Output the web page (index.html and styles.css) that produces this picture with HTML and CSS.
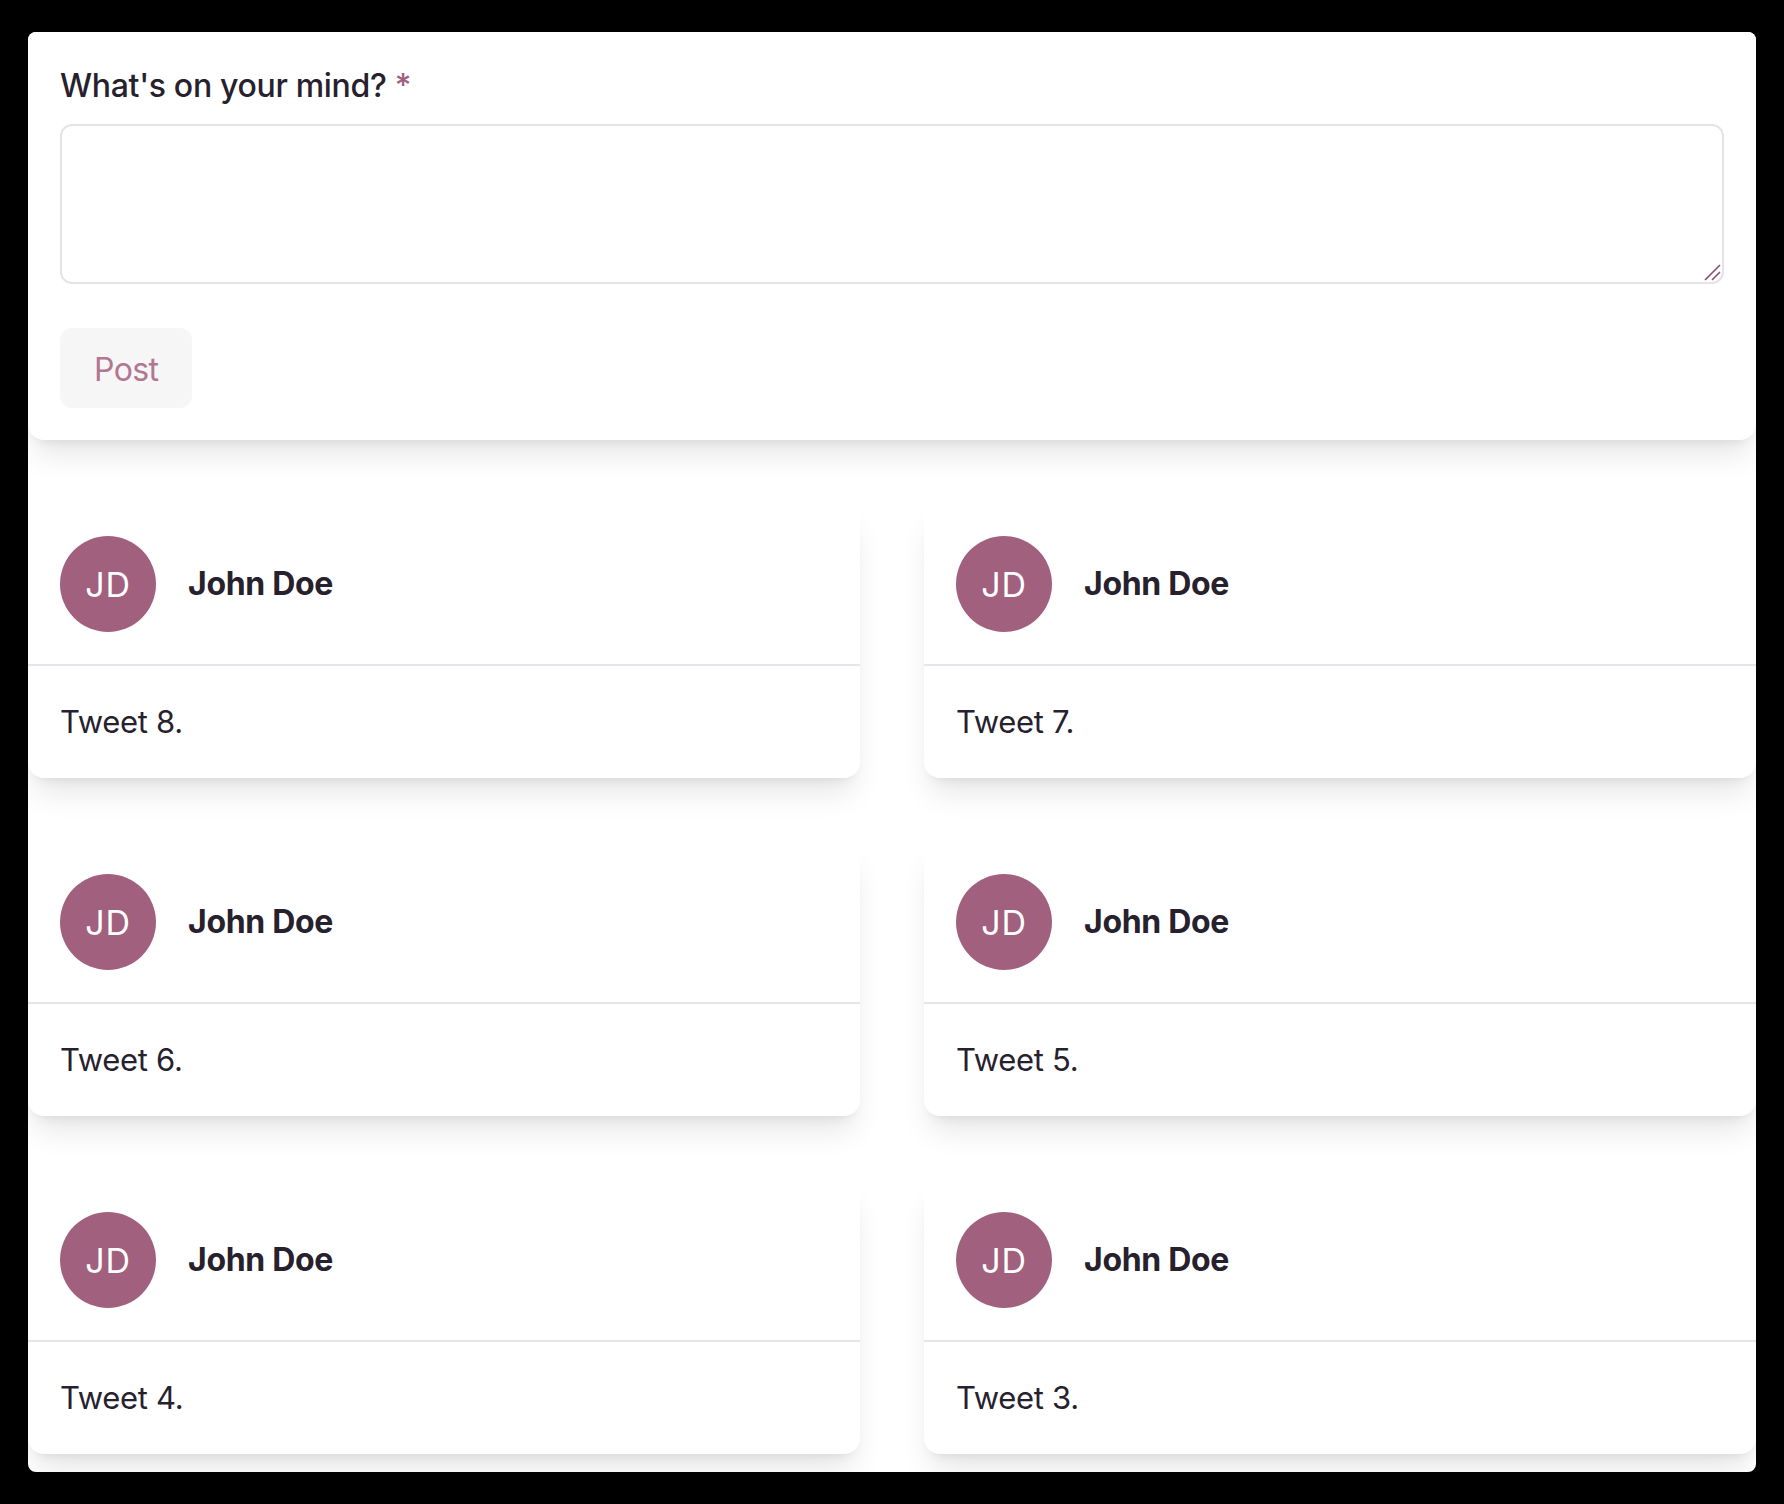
FILE: index.html
```html
<!DOCTYPE html>
<html lang="en">
<head>
<meta charset="utf-8">
<title>Tweets</title>
<link rel="stylesheet" href="styles.css">
</head>
<body>
<div class="window">
  <form class="compose">
    <label class="compose-label" for="tweet">What's on your mind? <span class="req">*</span></label>
    <div class="field">
      <textarea id="tweet" class="compose-input" required></textarea>
      <svg class="resizer" viewBox="0 0 18 18" aria-hidden="true"><path d="M1 16 L16 1 M8 16 L16 8"/></svg>
    </div>
    <button type="button" class="post-btn">Post</button>
  </form>
  <div class="feed">
    <article class="tweet">
      <header class="tweet-head"><div class="avatar">JD</div><span class="name">John Doe</span></header>
      <p class="tweet-body">Tweet 8.</p>
    </article>
    <article class="tweet">
      <header class="tweet-head"><div class="avatar">JD</div><span class="name">John Doe</span></header>
      <p class="tweet-body">Tweet 7.</p>
    </article>
    <article class="tweet">
      <header class="tweet-head"><div class="avatar">JD</div><span class="name">John Doe</span></header>
      <p class="tweet-body">Tweet 6.</p>
    </article>
    <article class="tweet">
      <header class="tweet-head"><div class="avatar">JD</div><span class="name">John Doe</span></header>
      <p class="tweet-body">Tweet 5.</p>
    </article>
    <article class="tweet">
      <header class="tweet-head"><div class="avatar">JD</div><span class="name">John Doe</span></header>
      <p class="tweet-body">Tweet 4.</p>
    </article>
    <article class="tweet">
      <header class="tweet-head"><div class="avatar">JD</div><span class="name">John Doe</span></header>
      <p class="tweet-body">Tweet 3.</p>
    </article>
  </div>
</div>
</body>
</html>
```

FILE: styles.css
```css
* { box-sizing: border-box; }
html, body { margin: 0; }
body {
  background: #000;
  padding: 32px 28px;
  font-family: Inter, "Noto Sans", sans-serif;
  color: #27212e;
  letter-spacing: -0.02em;
}
.window {
  background: #fff;
  border-radius: 8px;
  overflow: hidden;
  height: 1440px;
  display: flex;
  flex-direction: column;
  gap: 64px;
}
.compose {
  background: #fff;
  border-radius: 0 0 16px 16px;
  box-shadow: 0 20px 30px -6px rgba(0,0,0,.1), 0 8px 12px -8px rgba(0,0,0,.1);
  padding: 32px;
  display: flex;
  flex-direction: column;
  align-items: flex-start;
}
.compose-label {
  font-size: 32px;
  line-height: 44px;
  font-weight: 500;
}
.req { color: #a0607e; }
.field {
  position: relative;
  width: 100%;
  margin-top: 16px;
}
.compose-input {
  display: block;
  width: 100%;
  height: 160px;
  border: 2px solid #e4e4e7;
  border-radius: 12px;
  resize: none;
  font: inherit;
  font-size: 32px;
  padding: 16px 24px;
  outline: none;
}
.resizer {
  position: absolute;
  right: 2px;
  bottom: 2px;
  width: 18px;
  height: 18px;
  fill: none;
  stroke: #8a4f6c;
  stroke-width: 1.6;
}
.post-btn {
  margin-top: 44px;
  height: 80px;
  padding: 3px 34px 0;
  border: 0;
  border-radius: 12px;
  background: #f6f6f7;
  color: #b27592;
  font-family: inherit;
  font-size: 32px;
  line-height: 48px;
  font-weight: 400;
  letter-spacing: -0.02em;
}
.feed {
  display: grid;
  grid-template-columns: 1fr 1fr;
  gap: 64px;
}
.tweet {
  background: #fff;
  border-radius: 16px;
  box-shadow: 0 20px 30px -6px rgba(0,0,0,.1), 0 8px 12px -8px rgba(0,0,0,.1);
}
.tweet-head {
  display: flex;
  align-items: center;
  gap: 32px;
  padding: 32px;
  border-bottom: 2px solid #e6e6ea;
}
.avatar {
  width: 96px;
  height: 96px;
  flex: none;
  border-radius: 50%;
  background: #a0607e;
  color: #fff;
  display: flex;
  align-items: center;
  justify-content: center;
  font-size: 34px;
  letter-spacing: 0.02em;
}
.name {
  font-size: 32px;
  line-height: 48px;
  font-weight: 700;
  letter-spacing: -0.01em;
}
.tweet-body {
  margin: 0;
  padding: 32px;
  font-size: 31px;
  line-height: 48px;
  letter-spacing: -0.01em;
}
```
